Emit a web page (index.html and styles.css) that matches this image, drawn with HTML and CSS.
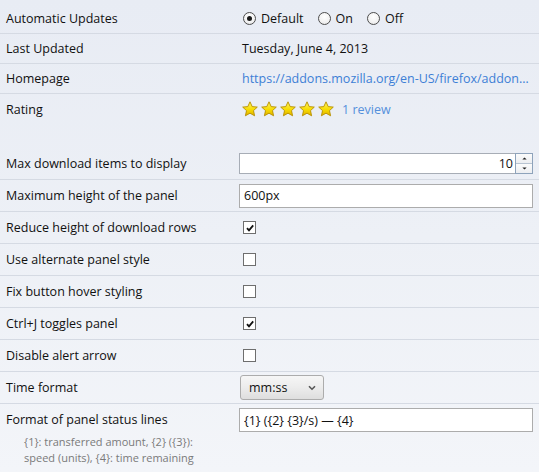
FILE: index.html
```html
<!DOCTYPE html>
<html>
<head>
<meta charset="utf-8">
<link rel="stylesheet" href="styles.css">
</head>
<body>
<div class="page">
  <div class="group info">
    <div class="row">
      <div class="label">Automatic Updates</div>
      <div class="value radios">
        <span class="radio on"></span><span class="rtext">Default</span>
        <span class="radio"></span><span class="rtext">On</span>
        <span class="radio"></span><span class="rtext">Off</span>
      </div>
    </div>
    <div class="row">
      <div class="label">Last Updated</div>
      <div class="value text">Tuesday, June 4, 2013</div>
    </div>
    <div class="row">
      <div class="label">Homepage</div>
      <div class="value text"><a class="link" href="#">https://addons.mozilla.org/en-US/firefox/addon…</a></div>
    </div>
    <div class="row last">
      <div class="label">Rating</div>
      <div class="value text">
        <span class="stars">
          <svg class="star" viewBox="0 0 16 16"><defs><linearGradient id="sg" x1="0" y1="0" x2="0" y2="1"><stop offset="0" stop-color="#fff46a"/><stop offset="0.55" stop-color="#f7dc00"/><stop offset="1" stop-color="#e0b000"/></linearGradient></defs><polygon points="8,0.8 10.2,5.6 15.3,6.1 11.5,9.6 12.6,14.8 8,12.2 3.4,14.8 4.5,9.6 0.7,6.1 5.8,5.6" fill="url(#sg)" stroke="#b58f00" stroke-width="0.9" stroke-linejoin="round"/></svg>
          <svg class="star" viewBox="0 0 16 16"><polygon points="8,0.8 10.2,5.6 15.3,6.1 11.5,9.6 12.6,14.8 8,12.2 3.4,14.8 4.5,9.6 0.7,6.1 5.8,5.6" fill="url(#sg)" stroke="#b58f00" stroke-width="0.9" stroke-linejoin="round"/></svg>
          <svg class="star" viewBox="0 0 16 16"><polygon points="8,0.8 10.2,5.6 15.3,6.1 11.5,9.6 12.6,14.8 8,12.2 3.4,14.8 4.5,9.6 0.7,6.1 5.8,5.6" fill="url(#sg)" stroke="#b58f00" stroke-width="0.9" stroke-linejoin="round"/></svg>
          <svg class="star" viewBox="0 0 16 16"><polygon points="8,0.8 10.2,5.6 15.3,6.1 11.5,9.6 12.6,14.8 8,12.2 3.4,14.8 4.5,9.6 0.7,6.1 5.8,5.6" fill="url(#sg)" stroke="#b58f00" stroke-width="0.9" stroke-linejoin="round"/></svg>
          <svg class="star" viewBox="0 0 16 16"><polygon points="8,0.8 10.2,5.6 15.3,6.1 11.5,9.6 12.6,14.8 8,12.2 3.4,14.8 4.5,9.6 0.7,6.1 5.8,5.6" fill="url(#sg)" stroke="#b58f00" stroke-width="0.9" stroke-linejoin="round"/></svg>
        </span>
        <a class="link review" href="#">1 review</a>
      </div>
    </div>
  </div>

  <div class="group prefs">
    <div class="row">
      <div class="label">Max download items to display</div>
      <div class="value">
        <div class="numbox">
          <input class="numinput" type="text" value="10">
          <div class="spin">
            <div class="spinbtn"><svg viewBox="0 0 7 4" class="arr"><polygon points="0.5,3.5 3.5,0.5 6.5,3.5" fill="#222"/></svg></div>
            <div class="spinbtn"><svg viewBox="0 0 7 4" class="arr"><polygon points="0.5,0.5 6.5,0.5 3.5,3.5" fill="#222"/></svg></div>
          </div>
        </div>
      </div>
    </div>
    <div class="row">
      <div class="label">Maximum height of the panel</div>
      <div class="value"><input class="textinput" type="text" value="600px"></div>
    </div>
    <div class="row">
      <div class="label">Reduce height of download rows</div>
      <div class="value"><span class="check on"><svg viewBox="0 0 11 11"><path d="M2.2 5.6 L4.4 8 L9 2.6" fill="none" stroke="#111" stroke-width="2"/></svg></span></div>
    </div>
    <div class="row">
      <div class="label">Use alternate panel style</div>
      <div class="value"><span class="check"></span></div>
    </div>
    <div class="row">
      <div class="label">Fix button hover styling</div>
      <div class="value"><span class="check"></span></div>
    </div>
    <div class="row">
      <div class="label">Ctrl+J toggles panel</div>
      <div class="value"><span class="check on"><svg viewBox="0 0 11 11"><path d="M2.2 5.6 L4.4 8 L9 2.6" fill="none" stroke="#111" stroke-width="2"/></svg></span></div>
    </div>
    <div class="row">
      <div class="label">Disable alert arrow</div>
      <div class="value"><span class="check"></span></div>
    </div>
    <div class="row">
      <div class="label">Time format</div>
      <div class="value">
        <div class="select"><span class="seltext">mm:ss</span><svg class="chev" viewBox="0 0 8 6"><path d="M1 1.2 L4 4.2 L7 1.2" fill="none" stroke="#555" stroke-width="1.6"/></svg></div>
      </div>
    </div>
    <div class="row status">
      <div class="labelcol">
        <div class="label">Format of panel status lines</div>
        <div class="desc">{1}: transferred amount, {2} ({3}): speed (units), {4}: time remaining</div>
      </div>
      <div class="value"><input class="textinput" type="text" value="{1} ({2} {3}/s) — {4}"></div>
    </div>
  </div>
</div>
</body>
</html>
```

FILE: styles.css
```css
html, body {
  margin: 0;
  padding: 0;
  height: 100%;
}
body {
  font-family: "Open Sans", "Noto Sans", sans-serif;
  font-size: 12.5px;
  color: #111;
  background: linear-gradient(to bottom, #e8ecf4 0%, #edf0f6 50%, #f3f5f9 100%);
  overflow: hidden;
}
.page {
  padding-top: 4px;
}
.row {
  display: flex;
  align-items: center;
  height: 29px;
  border-bottom: 1px solid #d5dae3;
}
.row.last {
  height: 30px;
  border-bottom: none;
}
.label {
  width: 239px;
  flex: none;
  padding-left: 6px;
  box-sizing: border-box;
  white-space: nowrap;
}
.value {
  flex: 1;
  min-width: 0;
  padding-right: 6px;
  display: flex;
  align-items: center;
}
.value.text {
  padding-left: 3px;
  white-space: nowrap;
}
.radios {
  padding-left: 4px;
}
.radio {
  width: 13px;
  height: 13px;
  box-sizing: border-box;
  border: 1px solid #4d4d4d;
  border-radius: 50%;
  background: radial-gradient(circle at 50% 35%, #ffffff 0%, #f2f2f2 60%, #dcdcdc 100%);
  display: inline-flex;
  align-items: center;
  justify-content: center;
  flex: none;
}
.radio.on::after {
  content: "";
  width: 5px;
  height: 5px;
  border-radius: 50%;
  background: #1a1a1a;
}
.rtext {
  margin-left: 5px;
  margin-right: 14px;
}
.link {
  color: #3d7fd6;
  text-decoration: none;
}
.stars {
  display: flex;
  gap: 3px;
}
.star {
  width: 16px;
  height: 16px;
  display: block;
}
.review {
  margin-left: 8px;
  color: #5590dc;
}

.prefs {
  margin-top: 24px;
}
.prefs .row {
  height: 31px;
}
.numbox {
  flex: 1;
  height: 21px;
  box-sizing: border-box;
  border: 1px solid #a7adb6;
  background: #fff;
  display: flex;
}
.numinput {
  flex: 1;
  min-width: 0;
  border: none;
  outline: none;
  padding: 0 2px 0 4px;
  margin: 0;
  font: inherit;
  color: #111;
  text-align: right;
  background: transparent;
}
.spin {
  width: 16px;
  flex: none;
  display: flex;
  flex-direction: column;
  margin: -1px -1px -1px 0;
  border: 1px solid #8ea3bb;
}
.spinbtn {
  flex: 1;
  display: flex;
  align-items: center;
  justify-content: center;
  background: linear-gradient(to bottom, #fbfbfb, #eceef1);
}
.spinbtn + .spinbtn {
  border-top: 1px solid #b7c3d1;
}
.arr {
  width: 5px;
  height: 3px;
  display: block;
}
.textinput {
  flex: 1;
  min-width: 0;
  height: 24px;
  box-sizing: border-box;
  border: 1px solid #acacac;
  background: #fff;
  margin: 0;
  padding: 0 4px;
  font: inherit;
  color: #111;
  outline: none;
}
.check {
  width: 13px;
  height: 13px;
  box-sizing: border-box;
  border: 1px solid #6e6e6e;
  background: #fff;
  margin-left: 4px;
  display: flex;
  align-items: center;
  justify-content: center;
}
.check svg {
  width: 10px;
  height: 10px;
  display: block;
}
.select {
  width: 84px;
  height: 25px;
  box-sizing: border-box;
  margin-left: 1px;
  border: 1px solid #acacac;
  border-radius: 3px;
  background: linear-gradient(to bottom, #f6f6f6 0%, #ececec 50%, #dedede 100%);
  display: flex;
  align-items: center;
  padding: 0 7px 0 8px;
}
.seltext {
  flex: 1;
}
.chev {
  width: 8px;
  height: 6px;
  display: block;
}
.prefs .row.status {
  height: auto;
  border-bottom: none;
  align-items: flex-start;
  padding-top: 4px;
}
.labelcol {
  width: 239px;
  flex: none;
}
.status .label {
  line-height: 24px;
}
.desc {
  padding-left: 24px;
  padding-right: 26px;
  font-size: 11px;
  line-height: 16px;
  color: #7a7a7a;
  margin-top: 2px;
}
```
